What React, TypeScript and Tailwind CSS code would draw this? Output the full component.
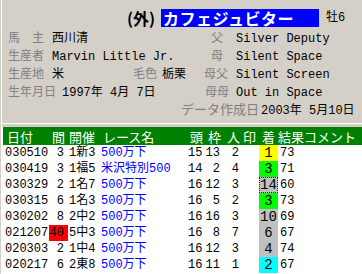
import React from "react";

type Row = {
  d: string;
  k: string;
  kai: string;
  race: string;
  t: string;
  w: string;
  n: string;
  c: string;
  cc: "yellow" | "lime" | "box" | "gray" | "cyan";
  r: string;
  red?: boolean;
};

const rows: Row[] = [
  { d: "030510", k: "3", kai: "1新3", race: "500万下", t: "15", w: "13", n: "2", c: "1", cc: "yellow", r: "73" },
  { d: "030419", k: "3", kai: "1福5", race: "米沢特別500", t: "14", w: "2", n: "4", c: "3", cc: "lime", r: "71" },
  { d: "030329", k: "2", kai: "1名7", race: "500万下", t: "16", w: "12", n: "3", c: "14", cc: "box", r: "60" },
  { d: "030315", k: "6", kai: "1名3", race: "500万下", t: "16", w: "5", n: "2", c: "3", cc: "lime", r: "73" },
  { d: "030202", k: "8", kai: "2中2", race: "500万下", t: "16", w: "16", n: "3", c: "10", cc: "gray", r: "69" },
  { d: "021207", k: "40", kai: "5中3", race: "500万下", t: "16", w: "8", n: "7", c: "6", cc: "gray", r: "67", red: true },
  { d: "020303", k: "2", kai: "1中4", race: "500万下", t: "16", w: "12", n: "3", c: "4", cc: "gray", r: "74" },
  { d: "020217", k: "6", kai: "2東8", race: "500万下", t: "16", w: "11", n: "1", c: "2", cc: "cyan", r: "67" },
];

function ChakuCell({ row }: { row: Row }) {
  if (row.cc === "box") {
    return (
      <div className="w-[19px] h-[16px] bg-[#c0c0c0] border border-dotted border-[#800000] flex items-center justify-center text-[14px] leading-none">
        {row.c}
      </div>
    );
  }
  const bg =
    row.cc === "yellow"
      ? "bg-[#ffff00]"
      : row.cc === "lime"
      ? "bg-[#00ff00]"
      : row.cc === "cyan"
      ? "bg-[#00ffff]"
      : "bg-[#c0c0c0]";
  return (
    <div className={`w-[19px] h-[16px] ${bg} flex items-center justify-center text-[14px] leading-none`}>
      {row.c}
    </div>
  );
}

export default function App() {
  return (
    <div className="w-[362px] h-[274px] overflow-hidden bg-[#d4d0c8] flex font-['Liberation_Mono','Noto_Sans_CJK_JP',monospace] text-[12px] text-black">
      <div className="w-[1px] shrink-0 bg-[#d4d0c8]" />
      <div className="w-[1px] shrink-0 bg-white" />
      <div className="flex-1 flex flex-col">
        {/* Title */}
        <div className="pt-[9px] h-[27px] flex items-start">
          <div className="w-[125px] shrink-0" />
          <div className="h-[18px] flex items-center font-['Noto_Sans_CJK_JP',sans-serif] font-bold text-[16px] leading-none w-[34px]">
            (外)
          </div>
          <div className="h-[18px] w-[158px] bg-[#0000ff] text-white flex items-center pl-[2px] font-['Noto_Sans_CJK_JP',sans-serif] font-bold text-[16px] leading-none tracking-[0.5px]">
            カフェジュビター
          </div>
          <div className="h-[18px] flex items-center pl-[7px] leading-none">牡6</div>
        </div>
        {/* Info rows */}
        <div className="mt-[3px] flex flex-col">
          <div className="h-[18px] flex items-center">
            <div className="w-[6px]" />
            <div className="w-[44px] text-[#808080]">馬　主</div>
            <div className="w-[158px]">西川清</div>
            <div className="w-[26px] text-[#808080] pl-[1px]">父</div>
            <div>Silver Deputy</div>
          </div>
          <div className="h-[18px] flex items-center">
            <div className="w-[6px]" />
            <div className="w-[44px] text-[#808080]">生産者</div>
            <div className="w-[158px]">Marvin Little Jr.</div>
            <div className="w-[26px] text-[#808080] pl-[1px]">母</div>
            <div>Silent Space</div>
          </div>
          <div className="h-[18px] flex items-center">
            <div className="w-[6px]" />
            <div className="w-[44px] text-[#808080]">生産地</div>
            <div className="w-[81px]">米</div>
            <div className="w-[29px] text-[#808080]">毛色</div>
            <div className="w-[42px]">栃栗</div>
            <div className="w-[32px] text-[#808080]">母父</div>
            <div>Silent Screen</div>
          </div>
          <div className="h-[18px] flex items-center">
            <div className="w-[6px]" />
            <div className="w-[54px] text-[#808080]">生年月日</div>
            <div className="w-[143px]">1997年 4月 7日</div>
            <div className="w-[31px] text-[#808080]">母母</div>
            <div>Out in Space</div>
          </div>
          <div className="h-[18px] flex items-center">
            <div className="w-[179px]" />
            <div className="w-[80px] text-[#808080] text-[13px]">データ作成日</div>
            <div>2003年 5月10日</div>
          </div>
        </div>
        {/* Separator */}
        <div className="mt-[3px] h-[1px] bg-white" />
        <div className="h-[3px]" />
        {/* Table */}
        <div className="flex-1 bg-white flex flex-col">
          <div className="ml-[1px] h-[18px] bg-[#008000] text-white text-[13px] flex items-center font-['Noto_Sans_CJK_JP',sans-serif] leading-none">
            <div className="w-[49px] pl-[4px]">日付</div>
            <div className="w-[17px]">間</div>
            <div className="w-[34px]">開催</div>
            <div className="w-[87px]">レース名</div>
            <div className="w-[18px]">頭</div>
            <div className="w-[19px]">枠</div>
            <div className="w-[16px]">人</div>
            <div className="w-[19px]">印</div>
            <div className="w-[16px]">着</div>
            <div>結果コメント</div>
          </div>
          {rows.map((row) => (
            <div key={row.d} className="h-[16px] flex items-center leading-none">
              <div className="w-[47px] pl-[3px]">{row.d}</div>
              <div
                className={`w-[19px] h-[16px] flex items-center justify-end pr-[4px] ${
                  row.red ? "bg-[#ff0000]" : ""
                }`}
              >
                {row.k}
              </div>
              <div className="w-[33px] pl-[1px]">{row.kai}</div>
              <div className="w-[87px] text-[#0000ff]">{row.race}</div>
              <div className="w-[14px] text-right">{row.t}</div>
              <div className="w-[18px] text-right">{row.w}</div>
              <div className="w-[19px] text-right">{row.n}</div>
              <div className="w-[20px]" />
              <ChakuCell row={row} />
              <div className="pl-[2px]">{row.r}</div>
            </div>
          ))}
        </div>
      </div>
    </div>
  );
}
